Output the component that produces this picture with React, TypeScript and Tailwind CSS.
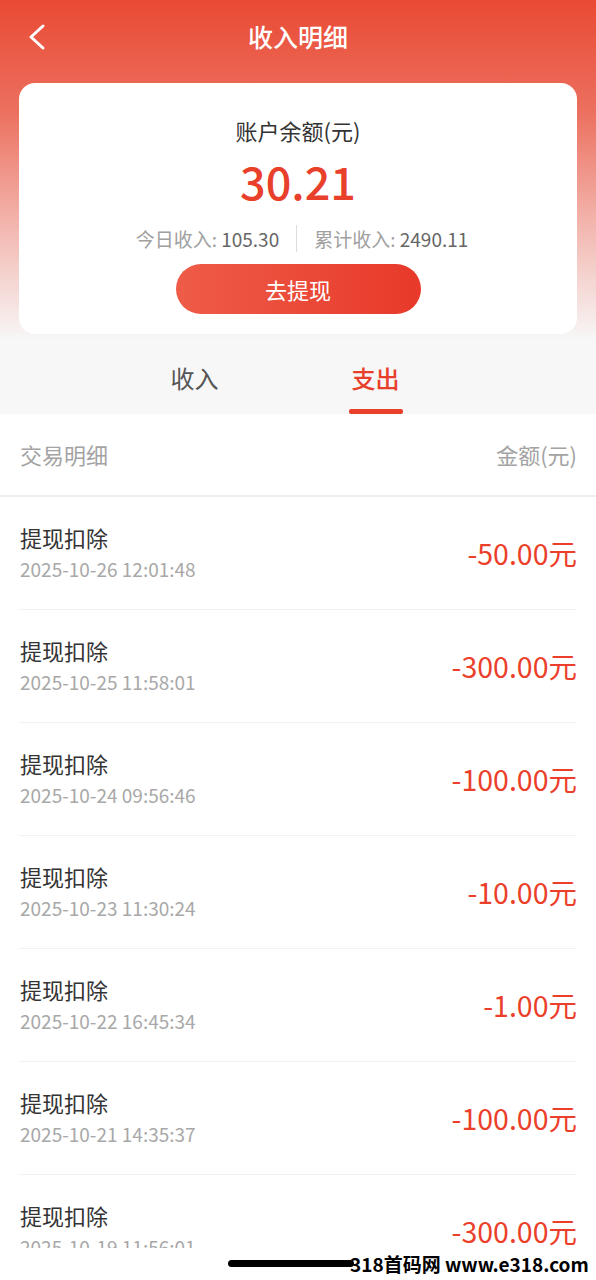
import React from "react";

const rows = [
  { date: "2025-10-26 12:01:48", amount: "-50.00元" },
  { date: "2025-10-25 11:58:01", amount: "-300.00元" },
  { date: "2025-10-24 09:56:46", amount: "-100.00元" },
  { date: "2025-10-23 11:30:24", amount: "-10.00元" },
  { date: "2025-10-22 16:45:34", amount: "-1.00元" },
  { date: "2025-10-21 14:35:37", amount: "-100.00元" },
  { date: "2025-10-19 11:56:01", amount: "-300.00元" },
];

export default function App() {
  return (
    <div
      className="w-[596px] h-[1280px] bg-white overflow-hidden flex flex-col"
      style={{ fontFamily: '"Noto Sans CJK SC", "Noto Sans", sans-serif' }}
    >
      <div className="h-[1248px] shrink-0 overflow-hidden flex flex-col">
        {/* Top section */}
        <div className="bg-[linear-gradient(180deg,#e94a34_0px,#ec6f5e_110px,#f2b3ab_220px,#f7f7f7_340px,#f7f7f7_414px)]">
          <div className="h-[74px] flex items-center">
            <div className="w-[80px] pl-[26px] flex items-center">
              <svg width="22" height="28" viewBox="0 0 22 28" fill="none">
                <polyline
                  points="17,3 5,14 17,25"
                  stroke="#ffffff"
                  strokeWidth="3"
                  strokeLinecap="round"
                  strokeLinejoin="round"
                />
              </svg>
            </div>
            <div className="flex-1 text-center text-white text-[25px] leading-[34px] font-medium -mt-[2px]">
              收入明细
            </div>
            <div className="w-[80px]" />
          </div>

          <div className="mx-[19px] mt-[9px] h-[251px] bg-white rounded-[16px] flex flex-col items-center pt-[32px]">
            <div className="text-[22px] leading-[30px] text-[#333333]">账户余额(元)</div>
            <div className="mt-[10px] text-[45px] leading-[52px] font-medium text-[#e8402b]">30.21</div>
            <div className="mt-[18px] pl-[8px] flex items-center text-[19px] leading-[26px]">
              <span className="text-[#a0a0a0]">
                今日收入: <span className="text-[#666666]">105.30</span>
              </span>
              <span className="mx-[17px] w-px h-[27px] bg-[#dddddd]" />
              <span className="text-[#a0a0a0]">
                累计收入: <span className="text-[#666666]">2490.11</span>
              </span>
            </div>
            <div className="mt-[12px] w-[245px] h-[50px] rounded-full bg-[linear-gradient(90deg,#ee5c48,#e8392a)] flex items-center justify-center text-white text-[22px]">
              去提现
            </div>
          </div>

          <div className="h-[80px] flex pl-[104px]">
            <div className="w-[181px] flex flex-col items-center pt-[28px]">
              <div className="text-[24px] leading-[32px] text-[#555555]">收入</div>
              <div className="mt-[15px] w-[54px] h-[5px] rounded-full bg-transparent" />
            </div>
            <div className="w-[181px] flex flex-col items-center pt-[28px]">
              <div className="text-[24px] leading-[32px] text-[#e8402b] font-medium">支出</div>
              <div className="mt-[15px] w-[54px] h-[5px] rounded-[2px] bg-[#e8402b]" />
            </div>
          </div>
        </div>

        {/* List header */}
        <div className="h-[83px] shrink-0 pl-[20px] pr-[19px] flex items-center justify-between border-b-2 border-[#eeeeee] text-[22px] text-[#a3a3a3]">
          <span>交易明细</span>
          <span>金额(元)</span>
        </div>

        {/* Rows */}
        <div className="px-[19px]">
          {rows.map((r, i) => (
            <div
              key={i}
              className="h-[113px] shrink-0 flex items-center justify-between border-b border-[#f2f2f2]"
            >
              <div className="flex flex-col pl-[1px] -mt-[2px]">
                <div className="text-[22px] leading-[30px] text-[#333333]">提现扣除</div>
                <div className="mt-[4px] text-[19px] leading-[26px] text-[#a8a8a8]">{r.date}</div>
              </div>
              <div className="text-[28.5px] leading-[36px] text-[#eb3f2b]">{r.amount}</div>
            </div>
          ))}
        </div>
      </div>

      {/* Bottom bar */}
      <div className="flex-1 relative bg-white">
        <div className="absolute left-[228px] top-[12px] w-[126px] h-[7px] rounded-full bg-black" />
        <div className="absolute left-[350px] top-[3px] text-[19px] leading-[26px] font-bold text-black whitespace-nowrap">
          318首码网 www.e318.com
        </div>
      </div>
    </div>
  );
}
